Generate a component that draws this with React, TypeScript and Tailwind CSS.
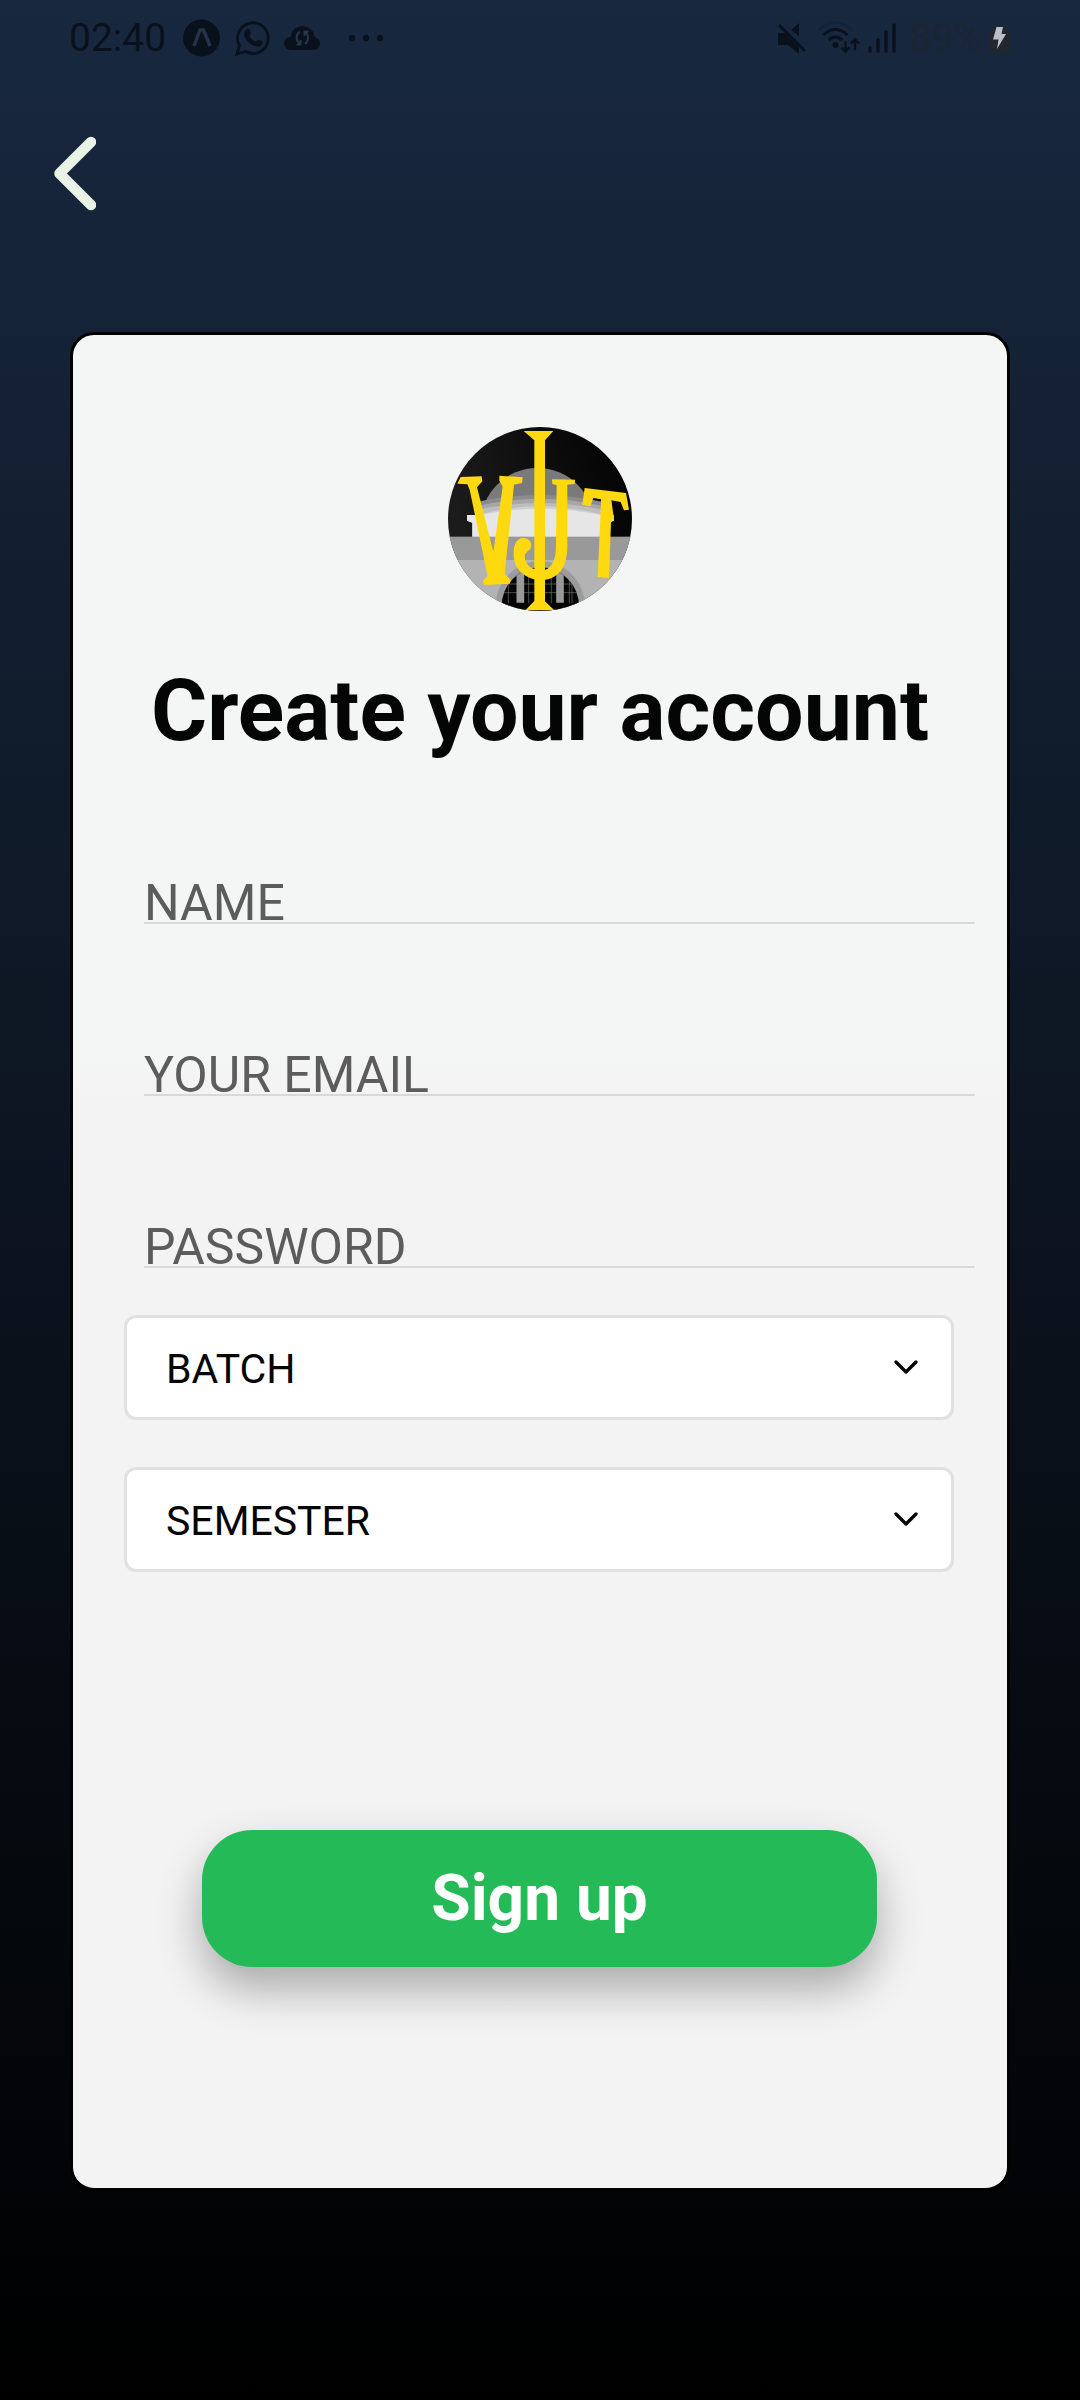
import { ChevronDown } from "lucide-react";

function StatusBar() {
  return (
    <header className="flex h-[76px] items-center justify-between pl-[69px] pr-[70px] text-[#09111c]">
      <div className="flex items-center">
        <span className="w-[114px] text-[39px] leading-[48px]">02:40</span>
        <svg className="h-[38px] w-[37px]" viewBox="0 0 37 38" aria-hidden="true">
          <circle cx="18.5" cy="19" r="18.5" fill="currentColor" />
          <path d="M11 27 L17 11 H20.500 L27 27" fill="none" stroke="#24334a" strokeWidth="3.500" />
        </svg>
        <svg className="ml-[15px] h-9 w-9" viewBox="0 0 36 36" aria-hidden="true">
          <path d="M2 34 L4.500 25.500 A15.300 15.300 0 1 1 10.500 31.500 Z" fill="none" stroke="currentColor" strokeWidth="2.800" />
          <path d="M11.500 9.500c1-.9 2.500-.9 3 .2l1.300 3.200c.3.800-.1 1.500-1.500 3 1.700 3 3.600 4.600 6.700 5.900 1.300-1.700 2-2.400 2.700-2.100l3.300 1.600c1 .5.800 1.700.2 2.900-1 1.900-3.500 2.800-5.700 2.200-6.200-1.600-10.500-5.800-12-10.200-.9-2.800.2-5.100 2-6.700z" fill="currentColor" />
        </svg>
        <svg className="ml-[13px] h-9 w-9" viewBox="0 0 36 36" aria-hidden="true">
          <rect x="0" y="17" width="36" height="13" rx="6.5" fill="currentColor" />
          <circle cx="18.500" cy="18" r="12" fill="currentColor" />
          <path d="M16 12 C11.500 14 11.500 21 16 23.500 M12.500 24.500 H16.500 V20 M21 24 C25 21.500 25 14.500 21 12 M24.500 11.500 H20.500 V16" fill="none" stroke="#27364a" strokeWidth="2" />
        </svg>
        <svg className="ml-7 h-2 w-9" viewBox="0 0 36 8" aria-hidden="true">
          <g fill="currentColor">
            <circle cx="4" cy="4" r="3.200" />
            <circle cx="18" cy="4" r="3.200" />
            <circle cx="32" cy="4" r="3.200" />
          </g>
        </svg>
      </div>
      <div className="flex items-center">
        <svg className="h-9 w-[30px]" viewBox="0 0 30 36" aria-hidden="true">
          <path d="M1 13 H8 L22 27 V34 L11 25 H1 Z M22 3 V16 L14 10 Z" fill="currentColor" />
          <path d="M2 5 L28 31" stroke="currentColor" strokeWidth="3" />
        </svg>
        <svg className="ml-[11px] h-9 w-[42px]" viewBox="0 0 42 36" aria-hidden="true">
          <g fill="none" stroke="currentColor" strokeWidth="3">
            <path d="M1 10 Q17 -5 34 10" stroke="#12243a" />
            <path d="M5.500 15 Q17 4 29.500 15 M10.500 20 Q17 14 24.500 20" />
            <path d="M27.500 21 V31 M23.500 27.500 L27.500 31.500 L31.500 27.500 M37 30 V20 M33 23.500 L37 19.500 L41 23.500" strokeWidth="2.400" />
          </g>
          <circle cx="17.500" cy="25" r="3" fill="currentColor" />
        </svg>
        <svg className="ml-2 h-9 w-7" viewBox="0 0 28 36" aria-hidden="true">
          <path d="M2 28 V31 M10 20 V31 M18 12 V31 M26 5 V31" stroke="currentColor" strokeWidth="3.400" strokeLinecap="round" />
        </svg>
        <span className="ml-[14px] w-[72px] text-[39px] leading-[48px] text-[#1b2632]">89%</span>
        <svg className="ml-[7px] h-7 w-[21px]" viewBox="0 0 21 28" aria-hidden="true">
          <path d="M0 4 H6 V2 H15 V4 H21 V28 H0 Z" fill="#22262d" />
          <path d="M7.500 3 H14 L12.500 10 H17 L8 25 L9.500 15.500 H4 Z" fill="#b9bec7" />
        </svg>
      </div>
    </header>
  );
}

function Logo() {
  return (
    <svg className="size-[184px]" viewBox="54 51 552 552" role="img" aria-label="VJIT">
      <defs>
        <clipPath id="logo-disc">
          <circle cx="330" cy="327" r="276" />
        </clipPath>
        <clipPath id="logo-dome">
          <circle cx="322" cy="345" r="171" />
        </clipPath>
        <clipPath id="logo-arch">
          <circle cx="331" cy="588" r="116" />
        </clipPath>
        <linearGradient id="logo-night" x1="0" y1="0.300" x2="1" y2="0">
          <stop offset="0" stopColor="#1b1b1b" />
          <stop offset="0.600" stopColor="#0b0b0b" />
          <stop offset="1" stopColor="#020202" />
        </linearGradient>
      </defs>
      <g clipPath="url(#logo-disc)">
        <rect x="54" y="51" width="552" height="552" fill="url(#logo-night)" />
        <g clipPath="url(#logo-dome)">
          <rect x="140" y="170" width="370" height="220" fill="#7a7a7a" />
        </g>
        <path d="M145 275 Q330 235 515 275 V320 H145 Z" fill="#8c8c8c" />
        <path d="M143 288 Q330 245 517 288 V320 H143 Z" fill="#a6a6a6" />
        <path d="M140 300 Q330 258 522 300 V325 H140 Z" fill="#bdbdbd" />
        <path d="M111 315 H140 Q330 262 522 315 H551 V332 L535 338 V382 H127 V338 L111 332 Z" fill="#d0d0d0" />
        <path d="M111 315 H150 Q330 278 512 315 H551 V332 L535 338 V382 H127 V338 L111 332 Z" fill="#e6e6e6" />
        <rect x="54" y="380" width="552" height="72" fill="#999" />
        <rect x="54" y="450" width="552" height="153" fill="#b3b3b3" />
        <circle cx="331" cy="588" r="134" fill="#9b9b9b" />
        <g clipPath="url(#logo-arch)">
          <rect x="210" y="470" width="240" height="133" fill="#050505" />
          <path d="M235 480 V580 M296 480 V580 M364 480 V580 M418 480 V580 M426 480 V580 M215 548 H447 M215 522 H447" stroke="#707070" strokeWidth="2" />
          <path d="M271 480 V578 M390 480 V578" stroke="#999" strokeWidth="23" />
        </g>
        <g fill="#ffd90f" stroke="none">
          <path d="M92 201 L155 199 L157 214 L141 232 L190 425 L218 230 L208 212 V197 L278 202 L276 219 L252 224 L224 492 L243 511 L239 521 L161 525 L160 511 L173 499 L119 239 L112 223 L82 221 Z" />
          <path d="M281 63 H370 L345 91 V574 L373 601 H286 L313 573 V91 Z" />
          <path d="M464 234 L588 249 L597 299 L582 301 L572 276 L544 271 L551 320 L543 337 L537 504 L503 501 L511 324 L513 268 L490 264 L481 289 L457 284 Z" />
        </g>
        <path d="M366 208 L435 209 L434 222 L412 224 V407 C412 480 380 511 325 511 C270 500 249 467 251 426 C252 399 263 385 279 384 C294 383 305 394 304 409 C303 421 289 424 285 434 C281 455 297 480 334 482 C365 480 378 450 378 407 L380 225 L367 222 Z" fill="#ffd90f" />
      </g>
    </svg>
  );
}

const fields = [
  { id: "name", label: "NAME", type: "text" },
  { id: "email", label: "YOUR EMAIL", type: "email" },
  { id: "password", label: "PASSWORD", type: "password" },
];

const dropdowns = [
  { id: "batch", label: "BATCH" },
  { id: "semester", label: "SEMESTER" },
];

export default function App() {
  return (
    <div className="flex min-h-screen flex-col bg-linear-to-b/srgb from-[#18283f] to-black font-['Roboto',sans-serif]">
      <StatusBar />
      <nav className="pl-[50px] pt-[54px]">
        <button type="button" aria-label="Go back" className="block">
          <svg className="h-[86px] w-[46px]" viewBox="0 0 46 86" aria-hidden="true">
            <path d="M41 12 L9.500 43.500 L41 75" fill="none" stroke="#e9f2e5" strokeWidth="10.500" strokeLinecap="round" strokeLinejoin="round" />
          </svg>
        </button>
      </nav>
      <main className="mx-[70px] mb-[209px] mt-[116px] rounded-3xl border-[3px] border-black bg-linear-to-b from-[#f4f6f5] from-38% to-[#f3f3f3] to-41% pb-[221px] pt-[92px]">
        <div className="flex justify-center">
          <Logo />
        </div>
        <h1 className="mt-[50px] text-center text-[86px] font-bold leading-[100px] text-[#050505]">Create your account</h1>
        <form onSubmit={(event) => event.preventDefault()}>
          <div className="ml-[71px] mr-8 mt-[122px] flex flex-col gap-[131px]">
            {fields.map((field) => (
              <input
                key={field.id}
                id={field.id}
                type={field.type}
                aria-label={field.label}
                placeholder={field.label}
                className="block h-[41px] w-full border-b-2 border-[#d8d8de] bg-transparent text-[50px] leading-[38px] text-[#050505] outline-none placeholder:text-[#5c5c5c]"
              />
            ))}
          </div>
          <div className="ml-[51px] mr-[53px] mt-[47px] flex flex-col gap-[47px]">
            {dropdowns.map((dropdown) => (
              <div key={dropdown.id} className="relative">
                <select
                  id={dropdown.id}
                  aria-label={dropdown.label}
                  className="block h-[105px] w-full appearance-none rounded-xl border-[3px] border-[#e0e0e0] bg-white px-[39px] pt-1 text-[41px] text-[#050505]"
                >
                  <option>{dropdown.label}</option>
                </select>
                <ChevronDown className="pointer-events-none absolute right-7 top-8 size-10 text-[#050505]" strokeWidth={2} aria-hidden="true" />
              </div>
            ))}
          </div>
          <div className="ml-[129px] mr-[130px] mt-[258px]">
            <button
              type="submit"
              className="block h-[137px] w-full rounded-[50px] bg-[#24ba57] text-[64px] font-bold text-white shadow-[0_22px_44px_rgba(0,0,0,0.3)]"
            >
              Sign up
            </button>
          </div>
        </form>
      </main>
    </div>
  );
}
